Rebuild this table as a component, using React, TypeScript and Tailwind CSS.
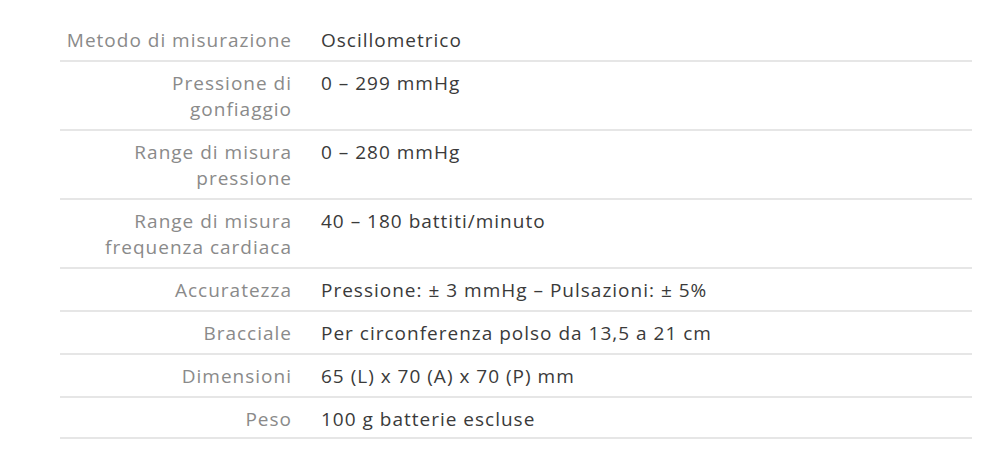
import React from "react";

const rows: { label: string[]; value: string }[] = [
  { label: ["Metodo di misurazione"], value: "Oscillometrico" },
  { label: ["Pressione di", "gonfiaggio"], value: "0 – 299 mmHg" },
  { label: ["Range di misura", "pressione"], value: "0 – 280 mmHg" },
  { label: ["Range di misura", "frequenza cardiaca"], value: "40 – 180 battiti/minuto" },
  { label: ["Accuratezza"], value: "Pressione: ± 3 mmHg – Pulsazioni: ± 5%" },
  { label: ["Bracciale"], value: "Per circonferenza polso da 13,5 a 21 cm" },
  { label: ["Dimensioni"], value: "65 (L) x 70 (A) x 70 (P) mm" },
  { label: ["Peso"], value: "100 g batterie escluse" },
];

export default function App() {
  return (
    <div
      className="w-[1000px] h-[465px] bg-white pt-[19px] pl-[60px] pr-[28px]"
      style={{ fontFamily: '"Open Sans", "Liberation Sans", sans-serif' }}
    >
      {rows.map((r, i) => (
        <div
          key={i}
          className="flex border-b-2 border-[#e6e6e6] pt-[8px] pb-[7px] last:pb-[5px] text-[19px] leading-[26px] tracking-[1px]"
        >
          <div className="w-[232px] shrink-0 text-right text-[#8a8a8a]">
            {r.label.map((l, j) => (
              <div key={j}>{l}</div>
            ))}
          </div>
          <div className="pl-[29px] text-[#3a3a3a]">{r.value}</div>
        </div>
      ))}
    </div>
  );
}
